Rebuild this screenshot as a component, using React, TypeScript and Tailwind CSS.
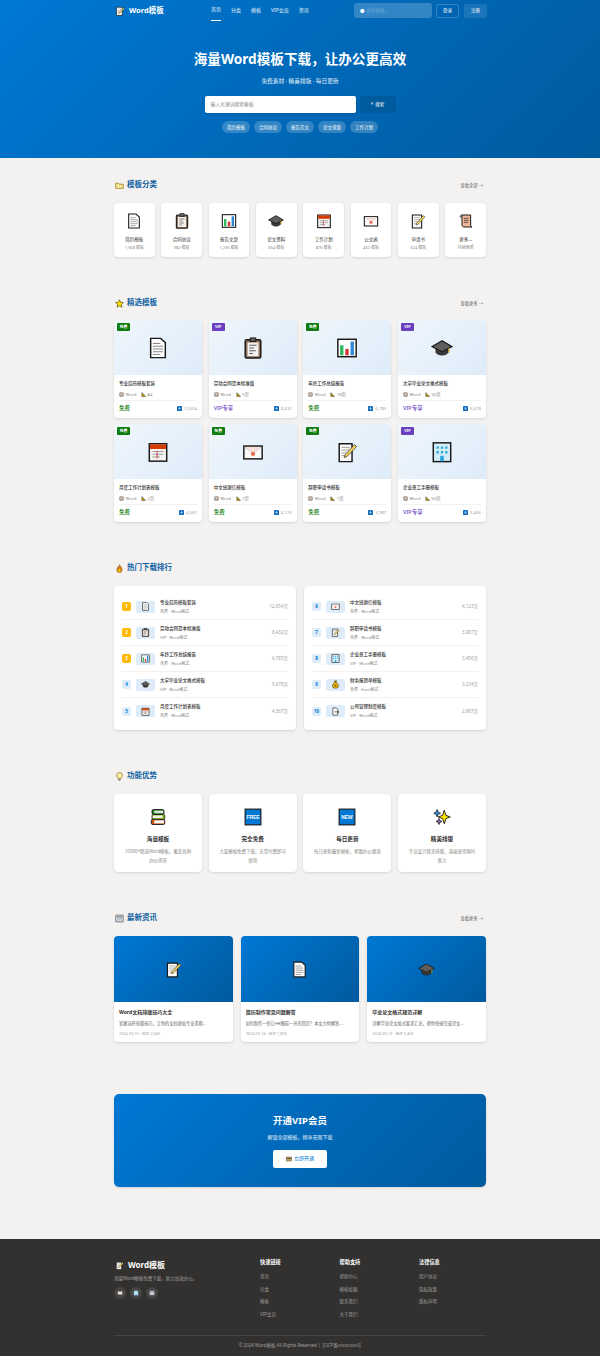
const cats = [
  ["file", "简历模板", "1,568 模板"],
  ["clipboard", "合同协议", "982 模板"],
  ["chart", "报告文案", "1,235 模板"],
  ["cap", "论文资料", "654 模板"],
  ["calendar", "工作计划", "876 模板"],
  ["mail", "公文函", "432 模板"],
  ["memo", "申请书", "324 模板"],
  ["scroll", "更多...", "持续更新"],
];

const templates = [
  ["file", "专业简历模板套装", "A4", "12,654", true],
  ["clipboard", "劳动合同范本标准版", "5页", "8,432", false],
  ["chart", "年终工作总结报告", "18页", "6,785", true],
  ["cap", "大学毕业论文格式模板", "30页", "5,678", false],
  ["calendar", "月度工作计划表模板", "2页", "4,567", true],
  ["mail", "中文感谢信模板", "2页", "4,123", true],
  ["memo", "辞职申请书模板", "1页", "3,987", true],
  ["building", "企业员工手册模板", "50页", "3,456", false],
] as const;

const ranksLeft = [
  ["1", "file", "专业简历模板套装", "免费 · Word格式", "12,654次"],
  ["2", "clipboard", "劳动合同范本标准版", "VIP · Word格式", "8,432次"],
  ["3", "chart", "年终工作总结报告", "免费 · Word格式", "6,785次"],
  ["4", "cap", "大学毕业论文格式模板", "VIP · Word格式", "5,678次"],
  ["5", "calendar", "月度工作计划表模板", "免费 · Word格式", "4,567次"],
];

const ranksRight = [
  ["6", "mail", "中文感谢信模板", "免费 · Word格式", "4,123次"],
  ["7", "memo", "辞职申请书模板", "免费 · Word格式", "3,987次"],
  ["8", "building", "企业员工手册模板", "VIP · Word格式", "3,456次"],
  ["9", "bag", "财务报销单模板", "免费 · Excel格式", "3,234次"],
  ["10", "export", "公司管理制度模板", "VIP · Word格式", "2,987次"],
];

const features = [
  ["books", "海量模板", "10000+精选Word模板，覆盖各种办公场景"],
  ["free", "完全免费", "大量模板免费下载，无需付费即可使用"],
  ["new", "每日更新", "每日更新最新模板，紧跟办公潮流"],
  ["sparkles", "精美排版", "专业设计精美排版，直接使用省时省力"],
];

const news = [
  ["memo", "Word文档排版技巧大全", "掌握这些排版技巧，让你的文档更加专业美观...", "2024-03-15 · 阅读 2,345"],
  ["file", "简历制作常见问题解答", "如何制作一份让HR眼前一亮的简历？本文为你解答...", "2024-03-14 · 阅读 1,876"],
  ["cap", "毕业论文格式规范详解", "详解毕业论文格式要求汇总，帮你快速完成论文...", "2024-03-13 · 阅读 3,456"],
];

const footerCols = [
  ["快速链接", ["首页", "分类", "模板", "VIP会员"]],
  ["帮助支持", ["帮助中心", "模板投稿", "联系我们", "关于我们"]],
  ["法律信息", ["用户协议", "隐私政策", "版权声明"]],
] as const;

// emoji-style drawings, the page has no color emoji font
const Icon = ({ name, className }: { name: string; className: string }) => {
  const ink = "#1b1a19";
  return (
    <svg viewBox="0 0 24 24" className={className}>
      {name === "file" && (
        <>
          <path d="M4 1.5h11l5 4.5v16.5H4z" fill="#fff" stroke={ink} strokeWidth="1.6" />
          <path d="M6.5 7h8M6.5 10h11M6.5 13h11M6.5 16h11M6.5 19h8" stroke="#8a8886" strokeWidth="1.1" />
        </>
      )}
      {name === "clipboard" && (
        <>
          <rect x="3.5" y="3" width="17" height="20" rx="1.5" fill="#8e6f57" stroke={ink} strokeWidth="1.6" />
          <rect x="6" y="6" width="12" height="15" fill="#f3f2f1" />
          <rect x="9" y="1" width="6" height="4" fill="#605e5c" stroke={ink} strokeWidth="1" />
          <path d="M8 9h8M8 12h5M8 15h7M8 18h4" stroke="#605e5c" strokeWidth="1.1" />
        </>
      )}
      {name === "chart" && (
        <>
          <rect x="2" y="2.5" width="20" height="19" fill="#fff" stroke={ink} strokeWidth="1.6" />
          <rect x="4.5" y="9" width="3.6" height="11" fill="#2eb85c" />
          <rect x="10.2" y="13" width="3.6" height="7" fill="#d13438" />
          <rect x="15.9" y="5" width="3.6" height="15" fill="#2b88d8" />
        </>
      )}
      {name === "cap" && (
        <>
          <path d="M5.5 11v6c2 3.5 11 3.5 13 0v-6z" fill="#3b3a39" stroke={ink} strokeWidth="1" />
          <path d="M12 4 1 10.5 12 16l11-5.5z" fill="#605e5c" stroke={ink} strokeWidth="1.3" />
          <path d="M19.5 12v5" stroke="#c19c00" strokeWidth="1.2" />
        </>
      )}
      {name === "calendar" && (
        <>
          <rect x="2.5" y="3" width="19" height="19" fill="#f3f2f1" stroke={ink} strokeWidth="1.6" />
          <rect x="3.2" y="3.7" width="17.6" height="5" fill="#d83b01" />
          <path d="M6 11.5h12M6 14.5h12M6 17.5h8" stroke="#a19f9d" strokeWidth="1.2" />
          <path d="M11 11v8" stroke="#d13438" strokeWidth="1" />
        </>
      )}
      {name === "mail" && (
        <>
          <rect x="2" y="5.5" width="20" height="14" fill="#faf9f8" stroke={ink} strokeWidth="1.6" />
          <path d="m3 6.5 9 7 9-7" fill="#f9e0da" stroke="#c8c6c4" strokeWidth="0.8" />
          <circle cx="12" cy="14" r="2.4" fill="#e8705a" />
        </>
      )}
      {name === "memo" && (
        <>
          <path d="M3.5 3h14v19.5h-14z" fill="#faf9f8" stroke={ink} strokeWidth="1.6" />
          <path d="M6 7h9M6 10h9M6 13h6M6 16h4" stroke="#a19f9d" strokeWidth="1" />
          <path d="m9 18 1-3L20 4l2.5 2L12 17z" fill="#f2d45c" stroke={ink} strokeWidth="0.7" />
        </>
      )}
      {name === "scroll" && (
        <>
          <path d="M6 3h13v15c0 2 1 3 2 3H9c-1.5 0-3-1-3-3z" fill="#eeb99a" stroke={ink} strokeWidth="1.5" />
          <path d="M6 3C4 3 3 4 3 6h3M9 8h7M9 11h7M9 14h6" stroke={ink} strokeWidth="1" fill="none" />
        </>
      )}
      {name === "building" && (
        <>
          <rect x="2.5" y="2" width="19" height="20.5" fill="#d4eef9" stroke={ink} strokeWidth="1.6" />
          <path d="M6 6h2.5v2.5H6zM10.8 6h2.5v2.5h-2.5zM15.5 6H18v2.5h-2.5zM6 11h2.5v2.5H6zM10.8 11h2.5v2.5h-2.5zM15.5 11H18v2.5h-2.5zM10 16h4v6h-4z" fill="#29a8dd" />
        </>
      )}
      {name === "bag" && (
        <>
          <path d="M9 2h6l-1.5 4h-3z" fill="#c19c00" stroke={ink} strokeWidth="1" />
          <path d="M10 6h4c4 3 6 7 6 10 0 4-3 6-8 6s-8-2-8-6c0-3 2-7 6-10z" fill="#e8b500" stroke={ink} strokeWidth="1.2" />
          <circle cx="12" cy="15" r="3" fill="#8a6d00" />
        </>
      )}
      {name === "export" && (
        <>
          <path d="M5 2.5h9l4 4v15H5z" fill="#fff" stroke={ink} strokeWidth="1.6" />
          <path d="M9 13h11m-3-3 3.5 3-3.5 3" fill="none" stroke={ink} strokeWidth="1.6" />
        </>
      )}
      {name === "books" && (
        <>
          <rect x="3" y="15" width="18" height="7" rx="2" fill="#ca5010" stroke={ink} strokeWidth="1.2" />
          <rect x="7" y="16.5" width="13" height="4" fill="#faf9f8" />
          <rect x="4" y="8.5" width="17" height="6.5" rx="2" fill="#8cbd18" stroke={ink} strokeWidth="1.2" />
          <rect x="5" y="10" width="13" height="3.5" fill="#f3f2f1" />
          <rect x="4" y="2" width="16" height="6.5" rx="2" fill="#107c10" stroke={ink} strokeWidth="1.2" />
          <rect x="7" y="3.5" width="12" height="3.5" fill="#e1dfdd" />
        </>
      )}
      {(name === "free" || name === "new") && (
        <>
          <rect x="1.5" y="1.5" width="21" height="21" fill="#0078d4" stroke={ink} strokeWidth="1.5" />
          <text x="12" y="14.6" textAnchor="middle" fill="#fff" fontSize="6.5" fontWeight="700" fontFamily="'Liberation Sans',sans-serif">
            {name === "free" ? "FREE" : "NEW"}
          </text>
        </>
      )}
      {name === "sparkles" && (
        <>
          <path d="m15 3 2.2 6.8L23 12l-5.8 2.2L15 21l-2.2-6.8L7 12l5.8-2.2z" fill="#fde300" stroke={ink} strokeWidth="1.2" />
          <path d="m5.5 2 1.5 3.5L10 7 7 8.5 5.5 12 4 8.5 1 7l3-1.5z" fill="#2b88d8" stroke={ink} strokeWidth="1" />
          <path d="m8 14 1.2 2.8L12 18l-2.8 1.2L8 22l-1.2-2.8L4 18l2.8-1.2z" fill="#8764b8" stroke={ink} strokeWidth="1" />
        </>
      )}
      {name === "folder" && (
        <path d="M2 6h7l2 2.5h11v11H2z" fill="#fce100" fillOpacity="0.35" stroke="#986f0b" strokeWidth="2" />
      )}
      {name === "star" && (
        <path d="m12 2 3 6.8 7.4.8-5.5 5 1.6 7.3L12 18.2 5.5 22l1.6-7.3-5.5-5 7.4-.8z" fill="#fce100" stroke="#5c4a0a" strokeWidth="1.8" />
      )}
      {name === "fire" && (
        <>
          <path d="M12 1c1 4 7 7 7 14 0 5-3 8-7 8s-7-3-7-8c0-4 3-6 4-9 1 1 2 2 2 3 1-2 1-5 1-8z" fill="#d87a0c" stroke="#6b3b06" strokeWidth="1" />
          <path d="M12 12c1 2 3 3 3 6 0 2-1 3-3 3s-3-1-3-3c0-3 2-4 3-6z" fill="#fce100" />
        </>
      )}
      {name === "bulb" && (
        <>
          <path d="M12 1.5a7.5 7.5 0 0 0-4 13.8V18h8v-2.7A7.5 7.5 0 0 0 12 1.5z" fill="#fff4a8" stroke="#7a5c0a" strokeWidth="1.8" />
          <path d="M9 20h6M10 22.5h4" stroke="#605e5c" strokeWidth="1.8" />
        </>
      )}
      {name === "news" && (
        <>
          <rect x="2" y="3" width="20" height="18" rx="1" fill="#deecf9" stroke="#323130" strokeWidth="1.6" />
          <rect x="5" y="6" width="14" height="4" fill="#8a8886" />
          <path d="M5 13h14M5 16h14" stroke="#8a8886" strokeWidth="1.2" />
        </>
      )}
      {name === "card" && (
        <>
          <rect x="1.5" y="4" width="21" height="16" fill="#c8a24a" stroke="#3b3a39" strokeWidth="1.5" />
          <rect x="2" y="8" width="20" height="4" fill="#605e5c" />
        </>
      )}
      {name === "pack" && (
        <>
          <rect x="3" y="3" width="18" height="18" rx="2" fill="#b8a394" stroke="#605e5c" strokeWidth="2" />
          <path d="M7 9h10M7 14h10" stroke="#faf9f8" strokeWidth="2" />
        </>
      )}
      {name === "ruler" && <path d="M4 3v18h18z" fill="#c19c00" stroke="#3b3a39" strokeWidth="2.4" />}
      {name === "down" && (
        <>
          <rect width="24" height="24" rx="2" fill="#106ebe" />
          <path d="M12 5v10m-4-4 4 5 4-5" fill="none" stroke="#fff" strokeWidth="3" />
        </>
      )}
    </svg>
  );
};

const SectionHead = ({ icon, title, more }: { icon: string; title: string; more?: string }) => (
  <div className="flex h-[14px] items-center justify-between">
    <div className="flex items-center gap-[3px]">
      <Icon name={icon} className="ml-[1px] h-[9px] w-[9px]" />
      <h2 className="text-[7.5px] leading-none font-bold text-[#0f5fa3]">{title}</h2>
    </div>
    {more && <span className="pr-[3px] text-[4.3px] text-[#605e5c]">{more} →</span>}
  </div>
);

const RankRow = ({ row, last }: { row: string[]; last: boolean }) => {
  const top = Number(row[0]) <= 3;
  return (
    <div className={`flex h-[26px] items-center ${last ? "" : "border-b border-[#f3f2f1]"}`}>
      <div
        className={`flex h-[9px] w-[9px] items-center justify-center rounded-[2px] text-[4.5px] font-bold ${
          top ? "bg-[#ffb900] text-white" : "bg-[#deecf9] text-[#0078d4]"
        }`}
      >
        {row[0]}
      </div>
      <div className="ml-[5px] flex h-[12px] w-[19px] items-center justify-center rounded-[2px] bg-[#deecf9]">
        <Icon name={row[1]} className="h-[9px] w-[9px]" />
      </div>
      <div className="ml-[5px] flex-1">
        <div className="text-[4.5px] leading-[7px] font-medium text-[#323130]">{row[2]}</div>
        <div className="mt-[3px] text-[4px] leading-[6px] text-[#8a8886]">{row[3]}</div>
      </div>
      <div className="text-[4.5px] text-[#a19f9d]">{row[4]}</div>
    </div>
  );
};

export default function App() {
  return (
    <div className="min-h-[1356px] bg-[#f3f2f1] font-['Noto_Sans','Noto_Sans_CJK_SC',sans-serif]">
      <div className="h-[158px] bg-[linear-gradient(135deg,#0078d4,#005a9e)] text-white">
        <header className="mx-auto flex h-[21px] w-[372px] items-center">
          <Icon name="memo" className="ml-[1px] h-[10px] w-[10px]" />
          <span className="ml-[4px] w-[82px] text-[7.5px] font-bold">Word模板</span>
          <nav className="flex h-full items-center gap-[10px] text-[5px] text-white/90">
            <span className="flex h-full items-center border-b border-white">首页</span>
            <span>分类</span>
            <span>模板</span>
            <span>VIP会员</span>
            <span>资讯</span>
          </nav>
          <div className="ml-auto flex h-[15px] w-[78px] items-center rounded-[3px] bg-white/20 pl-[6px] text-[4.5px] text-white/25">
            <span className="mr-[2px] text-white">●</span>搜索模板...
          </div>
          <button className="ml-[4px] h-[14px] w-[23px] rounded-[2px] border border-white/20 text-[4.5px]">登录</button>
          <button className="mr-[-1px] ml-[5px] h-[14px] w-[23px] rounded-[2px] bg-white/10 text-[4.5px]">注册</button>
        </header>
        <div className="flex flex-col items-center">
          <h1 className="mt-[28px] text-[13.6px] leading-[20px] font-bold">海量Word模板下载，让办公更高效</h1>
          <p className="mt-[7px] text-[5.7px] leading-[10px] text-white/90">免费素材 · 精美排版 · 每日更新</p>
          <div className="mt-[10px] flex w-[191px] gap-[4px]">
            <div className="flex h-[17px] w-[151px] items-center rounded-[2px] bg-white pl-[6px] text-[4.8px] text-[#8a8886] shadow-sm">
              输入关键词搜索模板
            </div>
            <div className="flex h-[17px] w-[36px] items-center justify-center rounded-[2px] bg-[#005a9e] text-[4.5px]">
              <span className="mr-[2px]">*</span>搜索
            </div>
          </div>
          <div className="mt-[8px] flex gap-[4px]">
            {["简历模板", "合同协议", "报告范文", "论文排版", "工作计划"].map((t) => (
              <span key={t} className="flex h-[12px] w-[28px] items-center justify-center rounded-full bg-white/20 text-[4.5px]">
                {t}
              </span>
            ))}
          </div>
        </div>
      </div>

      <main className="mx-auto w-[372px]">
        <section className="pt-[20px]">
          <SectionHead icon="folder" title="模板分类" more="查看全部" />
          <div className="mt-[11px] grid grid-cols-8 gap-[6.67px]">
            {cats.map(([icon, name, count]) => (
              <div key={name} className="flex h-[54px] flex-col items-center rounded-[4px] bg-white pt-[10px] shadow-sm">
                <Icon name={icon} className="h-[16px] w-[16px]" />
                <div className="mt-[6.5px] text-[4.5px] leading-[7px] text-[#323130]">{name}</div>
                <div className="mt-[2.5px] text-[4px] leading-[6px] text-[#8a8886]">{count}</div>
              </div>
            ))}
          </div>
        </section>

        <section className="pt-[39px]">
          <SectionHead icon="star" title="精选模板" more="查看更多" />
          <div className="mt-[10px] grid grid-cols-4 gap-x-[6.67px] gap-y-[6px]">
            {templates.map(([icon, name, size, count, free]) => (
              <div key={name} className="h-[98px] overflow-hidden rounded-[4px] bg-white shadow-sm">
                <div className="relative flex h-[55px] items-center justify-center bg-[linear-gradient(135deg,#eff6fc,#deecf9)]">
                  <span
                    className={`absolute top-[3px] left-[3px] flex h-[8px] w-[13px] items-center justify-center rounded-[1px] text-[3.8px] font-bold text-white ${
                      free ? "bg-[#107c10]" : "bg-[#6b3fc0]"
                    }`}
                  >
                    {free ? "免费" : "VIP"}
                  </span>
                  <Icon name={icon} className="h-[22px] w-[22px]" />
                </div>
                <div className="px-[5px] pt-[5px]">
                  <div className="text-[4.5px] leading-[7px] font-medium text-[#323130]">{name}</div>
                  <div className="mt-[4px] flex items-center gap-[1.5px] text-[4.3px] leading-[6px] text-[#8a8886]">
                    <Icon name="pack" className="h-[5px] w-[5px]" />
                    <span className="mr-[3px]">Word</span>
                    <Icon name="ruler" className="h-[5px] w-[5px]" />
                    <span>{size}</span>
                  </div>
                  <div className="mt-[3px] flex h-[16px] items-center justify-between border-t border-[#f3f2f1]">
                    <span className={`text-[5.5px] font-medium ${free ? "text-[#107c10]" : "text-[#6b3fc0]"}`}>
                      {free ? "免费" : "VIP专享"}
                    </span>
                    <span className="flex items-center gap-[2px] text-[4.3px] text-[#a19f9d]">
                      <Icon name="down" className="h-[5px] w-[5px]" />
                      {count}
                    </span>
                  </div>
                </div>
              </div>
            ))}
          </div>
        </section>

        <section className="pt-[39px]">
          <SectionHead icon="fire" title="热门下载排行" />
          <div className="mt-[11px] grid grid-cols-2 gap-[8px]">
            {[ranksLeft, ranksRight].map((rows, i) => (
              <div key={i} className="h-[144px] rounded-[4px] bg-white px-[8px] py-[8px] shadow-sm">
                {rows.map((row, j) => (
                  <RankRow key={row[0]} row={row} last={j === 4} />
                ))}
              </div>
            ))}
          </div>
        </section>

        <section className="pt-[39px]">
          <SectionHead icon="bulb" title="功能优势" />
          <div className="mt-[11px] grid grid-cols-4 gap-[6.67px]">
            {features.map(([icon, name, desc]) => (
              <div key={name} className="flex h-[78px] flex-col items-center rounded-[4px] bg-white px-[9px] pt-[14px] text-center shadow-sm">
                <Icon name={icon} className="h-[18px] w-[18px]" />
                <div className="mt-[9px] text-[5.6px] leading-[9px] font-bold text-[#323130]">{name}</div>
                <div className="mt-[3px] text-[4.45px] leading-[8.5px] text-[#8a8886]">{desc}</div>
              </div>
            ))}
          </div>
        </section>

        <section className="pt-[39px]">
          <SectionHead icon="news" title="最新资讯" more="查看更多" />
          <div className="mt-[11px] grid grid-cols-3 gap-[8px]">
            {news.map(([icon, title, desc, date]) => (
              <div key={title} className="h-[106px] overflow-hidden rounded-[4px] bg-white shadow-sm">
                <div className="flex h-[66px] items-center justify-center bg-[linear-gradient(135deg,#0078d4,#005a9e)]">
                  <Icon name={icon} className="h-[17px] w-[17px]" />
                </div>
                <div className="px-[5px] pt-[6px]">
                  <div className="text-[5px] leading-[8px] font-bold text-[#323130]">{title}</div>
                  <div className="mt-[4px] truncate text-[4.2px] leading-[7px] text-[#605e5c]">{desc}</div>
                  <div className="mt-[4px] text-[3.8px] leading-[6px] text-[#a19f9d]">{date}</div>
                </div>
              </div>
            ))}
          </div>
        </section>

        <section className="pt-[52px]">
          <div className="flex h-[93px] flex-col items-center rounded-[5px] bg-[linear-gradient(135deg,#0078d4,#005a9e)] pt-[20px] text-white shadow-sm">
            <div className="text-[9.5px] leading-[14px] font-bold">开通VIP会员</div>
            <div className="mt-[5px] text-[5px] leading-[8px] text-white/90">解锁全部模板，畅享无限下载</div>
            <button className="mt-[9px] flex h-[18px] w-[54px] items-center justify-center gap-[2px] rounded-[2px] bg-white text-[5px] text-[#0078d4]">
              <Icon name="card" className="h-[6px] w-[6px]" />
              立即开通
            </button>
          </div>
        </section>
      </main>

      <footer className="mt-[52px] h-[117px] bg-[#323130]">
        <div className="mx-auto w-[372px]">
          <div className="flex h-[97px] border-b border-[#484644] pt-[18px]">
            <div className="w-[146px] shrink-0">
              <div className="flex items-center gap-[4px] pt-[2px] text-[8px] leading-[12px] font-bold text-white">
                <Icon name="memo" className="ml-[1px] h-[9px] w-[9px]" />
                Word模板
              </div>
              <p className="mt-[3px] text-[4.5px] leading-[8px] text-[#a19f9d]">海量Word模板免费下载，助力高效办公。</p>
              <div className="mt-[5px] flex gap-[4px]">
                {["mail", "building", "news"].map((i) => (
                  <span key={i} className="flex h-[12px] w-[12px] items-center justify-center rounded-full bg-[#484644]">
                    <Icon name={i} className="h-[6px] w-[6px]" />
                  </span>
                ))}
              </div>
            </div>
            {footerCols.map(([head, items]) => (
              <div key={head} className="w-[79.5px] shrink-0 last:w-[67px]">
                <div className="mt-[1px] text-[5.2px] leading-[8px] font-bold text-white">{head}</div>
                <div className="mt-[7px] flex flex-col gap-[5px]">
                  {items.map((t) => (
                    <span key={t} className="text-[4.5px] leading-[7.5px] text-[#a19f9d]">{t}</span>
                  ))}
                </div>
              </div>
            ))}
          </div>
          <div className="pt-[5px] text-center text-[4.5px] leading-[8px] text-[#a19f9d]">
            © 2024 Word模板 All Rights Reserved | 京ICP备xxxxxxxx号
          </div>
        </div>
      </footer>
    </div>
  );
}
